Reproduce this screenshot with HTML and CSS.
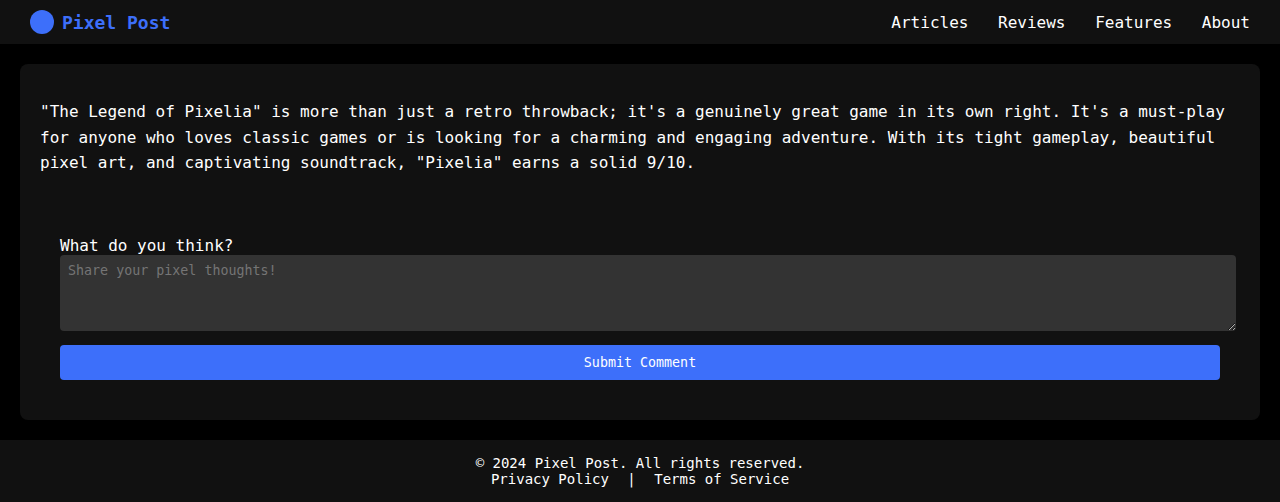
FILE: index.html
```html
<!DOCTYPE html>
<html lang="en">
<head>
<meta charset="utf-8">
<title>Pixel Post</title>
<link rel="stylesheet" href="styles.css">
</head>
<body>
<header class="header">
  <div class="logo"><span class="logo-mark"></span><span class="logo-text">Pixel Post</span></div>
  <nav class="nav">
    <a href="#">Articles</a>
    <a href="#">Reviews</a>
    <a href="#">Features</a>
    <a href="#">About</a>
  </nav>
</header>
<main class="card">
  <p class="review">"The Legend of Pixelia" is more than just a retro throwback; it's a genuinely great game in its own right. It's a must-play for anyone who loves classic games or is looking for a charming and engaging adventure. With its tight gameplay, beautiful pixel art, and captivating soundtrack, "Pixelia" earns a solid 9/10.</p>
  <form class="comment-form">
    <label class="label" for="comment">What do you think?</label>
    <textarea class="comment" id="comment" placeholder="Share your pixel thoughts!"></textarea>
    <button class="submit" type="button">Submit Comment</button>
  </form>
</main>
<footer class="footer">
  <div>© 2024 Pixel Post. All rights reserved.</div>
  <div class="links"><a href="#">Privacy Policy</a><span>|</span><a href="#">Terms of Service</a></div>
</footer>
</body>
</html>
```

FILE: styles.css
```css
body {
  margin: 0;
  background: #000;
  color: #fff;
  font-family: "DejaVu Sans Mono", monospace;
  font-size: 16px;
}
a {
  color: inherit;
  text-decoration: none;
}
.header {
  display: flex;
  justify-content: space-between;
  align-items: center;
  height: 44px;
  padding: 0 30px;
  background: #111;
}
.logo {
  display: flex;
  align-items: center;
  gap: 8px;
  color: #3d6ffa;
  font-size: 18px;
  font-weight: bold;
}
.logo-mark {
  width: 24px;
  height: 24px;
  border-radius: 50%;
  background: #3d6ffa;
}
.nav a {
  margin-left: 20px;
}
.card {
  box-sizing: border-box;
  height: 356px;
  margin: 20px;
  padding: 35px 20px 20px;
  border-radius: 8px;
  background: #111;
}
.review {
  margin: 0;
  line-height: 25.6px;
}
.comment-form {
  display: flex;
  flex-direction: column;
  padding: 60px 20px 0;
}
.label {
  line-height: 19px;
}
.comment {
  box-sizing: border-box;
  width: 1176px;
  height: 76px;
  margin: 0 0 14px;
  padding: 8px;
  border: 0;
  border-radius: 4px;
  background: #333;
  color: #fff;
  font-family: inherit;
  font-size: 13.3333px;
}
.submit {
  height: 35px;
  padding: 0;
  border: 0;
  border-radius: 4px;
  background: #3d6ffa;
  color: #fff;
  font-family: inherit;
  font-size: 13.3333px;
}
.footer {
  box-sizing: border-box;
  height: 62px;
  padding: 15px;
  background: #111;
  font-size: 14px;
  line-height: 16px;
  text-align: center;
}
.links {
  display: flex;
  justify-content: center;
  gap: 18.43px;
}
```
